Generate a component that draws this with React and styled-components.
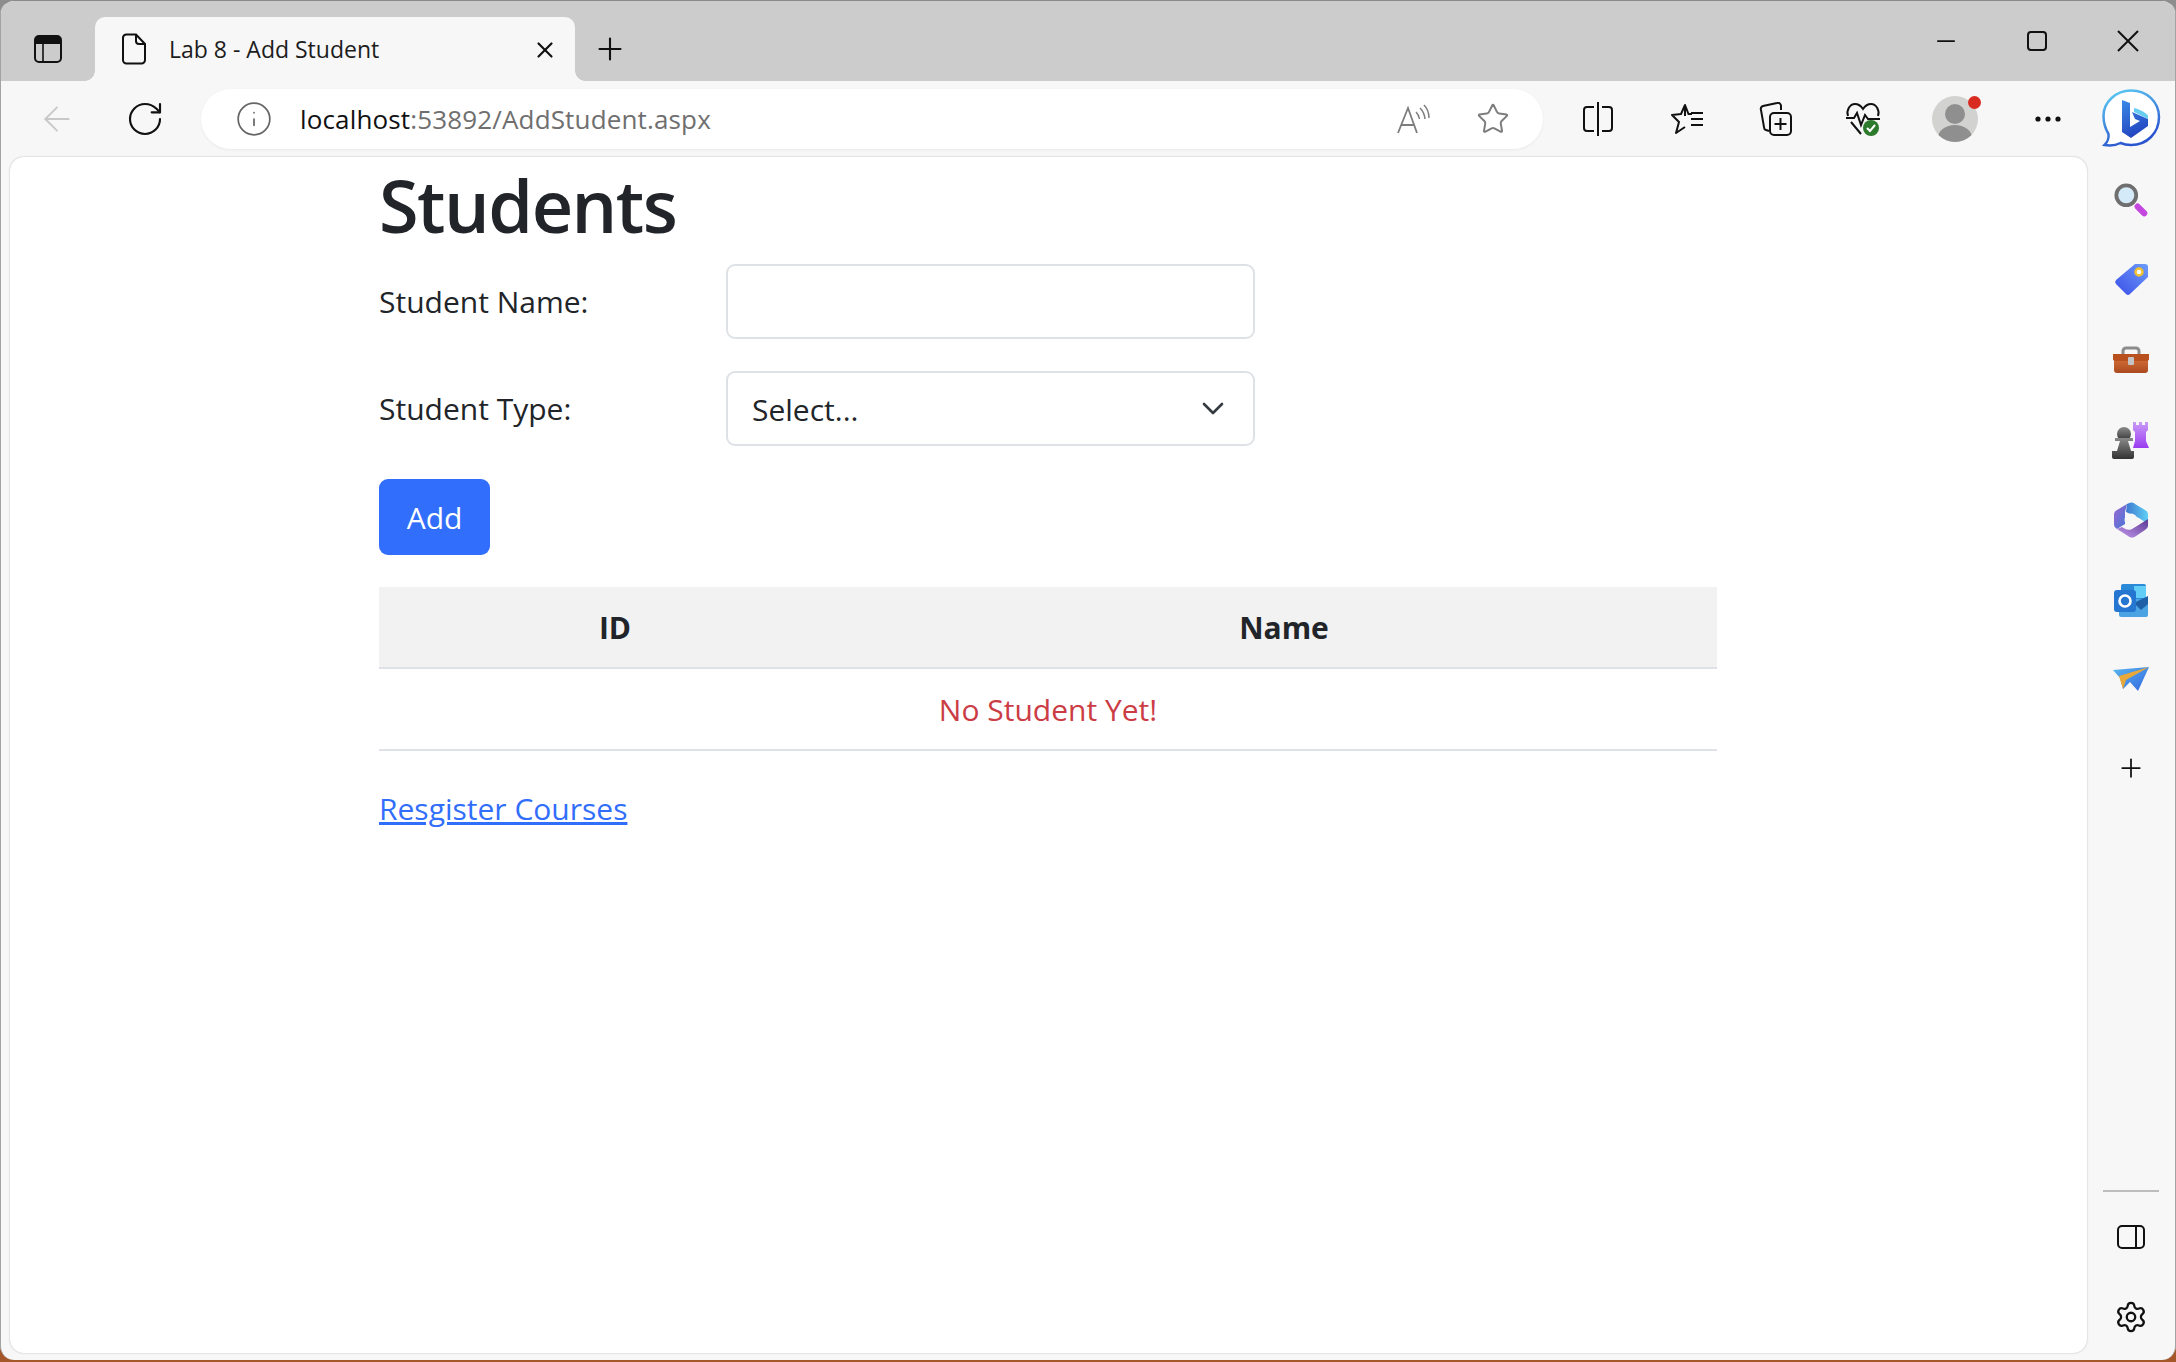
import React from "react";
import styled, { createGlobalStyle } from "styled-components";
import { ArrowLeft, Info, Minus, Plus, RotateCw, Settings, Star, X } from "lucide-react";

const uiFont = `"Open Sans", "Noto Sans", "Liberation Sans", sans-serif`;

const GlobalStyle = createGlobalStyle`
  html, body {
    margin: 0;
    padding: 0;
    background: #a5572a;
  }
  * {
    box-sizing: border-box;
  }
`;

const Desktop = styled.div`
  width: 2176px;
  height: 1362px;
  overflow: hidden;
  background: linear-gradient(#8d8d8d 0, #8d8d8d 70%, #a5572a 92%);
`;

const Browser = styled.div`
  width: 2176px;
  height: 1360px;
  display: flex;
  flex-direction: column;
  background: #f7f7f7;
  border-radius: 14px;
  border-top: 1px solid #8a8a8a;
  border-left: 1px solid #a3a3a3;
  border-right: 1px solid #a3a3a3;
  overflow: hidden;
  font-family: ${uiFont};
`;

const TabStrip = styled.div`
  height: 80px;
  flex: none;
  display: flex;
  align-items: flex-end;
  background: #cccccc;
`;

const StripSlot = styled.div`
  width: ${(p) => p.$w}px;
  height: 64px;
  flex: none;
  display: flex;
  align-items: center;
  justify-content: center;
`;

const Tab = styled.div`
  position: relative;
  width: 480px;
  height: 64px;
  flex: none;
  display: flex;
  align-items: center;
  padding: 0 0 0 26px;
  background: #f7f7f7;
  border-radius: 10px 10px 0 0;
  color: #1c1c1c;

  &::before,
  &::after {
    content: "";
    position: absolute;
    bottom: 0;
    width: 10px;
    height: 10px;
  }
  &::before {
    left: -10px;
    background: radial-gradient(circle at 0 0, #cccccc 9.5px, #f7f7f7 10px);
  }
  &::after {
    right: -10px;
    background: radial-gradient(circle at 100% 0, #cccccc 9.5px, #f7f7f7 10px);
  }
`;

const TabTitle = styled.span`
  flex: 1;
  margin-left: 22px;
  font-size: 23px;
  white-space: nowrap;
`;

const TabClose = styled.span`
  display: flex;
  width: 60px;
  justify-content: center;
  margin-top: 2px;
`;

const WindowControls = styled.div`
  margin-left: auto;
  align-self: flex-start;
  height: 80px;
  display: flex;
  padding-right: 2px;
`;

const ControlSlot = styled.div`
  width: 91px;
  display: flex;
  align-items: center;
  justify-content: center;
`;

const Toolbar = styled.div`
  height: 76px;
  flex: none;
  display: flex;
  align-items: center;
  padding-left: 12px;
  background: #f7f7f7;
`;

const ToolSlot = styled.div`
  position: relative;
  width: ${(p) => p.$w}px;
  height: 60px;
  flex: none;
  display: flex;
  align-items: center;
  justify-content: center;
`;

const AddressBar = styled.div`
  width: 1342px;
  height: 60px;
  flex: none;
  margin: 0 10px 0 12px;
  padding-left: 8px;
  display: flex;
  align-items: center;
  background: #ffffff;
  border-radius: 30px;
  box-shadow: 0 1px 3px rgba(0, 0, 0, 0.06);
`;

const UrlText = styled.div`
  flex: 1;
  margin-left: 1px;
  font-size: 26px;
  letter-spacing: 0.15px;
  color: #6f6f6f;
  white-space: nowrap;
`;

const UrlHost = styled.span`
  color: #111111;
`;

const Workspace = styled.div`
  flex: 1;
  min-height: 0;
  display: flex;
`;

const Page = styled.main`
  flex: 1;
  min-width: 0;
  margin: 0 0 7px 9px;
  background: #ffffff;
  border-radius: 14px;
  box-shadow: 0 0 2px rgba(0, 0, 0, 0.28);
  padding: 12px 1px 0 0;
`;

const Container = styled.div`
  width: 1338px;
  margin: 0 auto;
  color: #212529;
`;

const Heading = styled.h1`
  margin: 0 0 23px;
  height: 72px;
  font-size: 72px;
  line-height: 72px;
  font-weight: 600;
  letter-spacing: -1.5px;
`;

const FormRow = styled.div`
  display: flex;
  align-items: center;
  margin-bottom: 32px;
`;

const FieldLabel = styled.label`
  width: 347px;
  flex: none;
  font-size: 30px;
  line-height: 40px;
`;

const TextInput = styled.input`
  width: 529px;
  height: 75px;
  padding: 0 24px;
  background: #ffffff;
  border: 2px solid #dee2e6;
  border-radius: 9px;
  font-family: inherit;
  font-size: 30px;
`;

const SelectBox = styled.div`
  position: relative;
  width: 529px;
  height: 75px;
`;

const Select = styled.select`
  appearance: none;
  width: 100%;
  height: 100%;
  padding: 1px 60px 0 24px;
  background: #ffffff;
  border: 2px solid #dee2e6;
  border-radius: 9px;
  color: #212529;
  font-family: inherit;
  font-size: 30px;
`;

const Chevron = styled.svg`
  position: absolute;
  right: 31px;
  top: 31px;
  pointer-events: none;
`;

const AddButton = styled.button`
  display: block;
  width: 111px;
  height: 76px;
  margin-top: 33px;
  padding: 0;
  background: #316efb;
  border: 0;
  border-radius: 9px;
  color: #ffffff;
  font-family: inherit;
  font-size: 30px;
`;

const StudentTable = styled.table`
  width: 100%;
  margin-top: 32px;
  border-collapse: collapse;
  table-layout: fixed;
  font-size: 30px;
`;

const HeadCell = styled.th`
  height: 81px;
  width: ${(p) => p.$w};
  padding: 0;
  background: #f2f2f2;
  border-bottom: 2px solid #dee2e6;
  font-weight: 700;
  color: #212529;
`;

const EmptyCell = styled.td`
  height: 82px;
  padding: 0;
  text-align: center;
  color: #cb3c45;
  border-bottom: 2px solid #dee2e6;
`;

const CourseLink = styled.a`
  display: inline-block;
  margin-top: 38px;
  font-size: 30px;
  line-height: 40px;
  color: #316efb;
  text-decoration: underline;
`;

const Sidebar = styled.aside`
  width: 88px;
  flex: none;
  display: flex;
  flex-direction: column;
  align-items: center;
  padding: 3px 0 3px;
`;

const SideSlot = styled.div`
  width: 100%;
  height: 80px;
  flex: none;
  display: flex;
  align-items: center;
  justify-content: center;
  margin-top: ${(p) => p.$top || 0}px;
`;

const SideRule = styled.div`
  width: 56px;
  height: 2px;
  flex: none;
  margin-top: auto;
  margin-bottom: 5px;
  background: #bdbdbd;
`;

const Dot = styled.span`
  position: absolute;
  top: 7px;
  right: ${(p) => p.$right}px;
  width: 13px;
  height: 13px;
  border-radius: 50%;
  background: #d92c20;
`;

const PanelIcon = () => (
  <svg width="30" height="30" viewBox="0 0 30 30">
    <rect x="2" y="2" width="26" height="26" rx="4" fill="none" stroke="#111" strokeWidth="2" />
    <path d="M2 6a4 4 0 0 1 4-4h18a4 4 0 0 1 4 4v4H2z" fill="#111" />
    <path d="M10 10v18" stroke="#111" strokeWidth="1.6" />
  </svg>
);

const PageIcon = () => (
  <svg width="26" height="32" viewBox="0 0 26 32" fill="none" stroke="#111" strokeWidth="2">
    <path d="M5 1.5h10l9 9.5v16a3.5 3.5 0 0 1-3.5 3.5h-15A3.5 3.5 0 0 1 2 27V5a3.500 3.500 0 0 1 3-3.500z" />
    <path d="M15 1.500V8a3 3 0 0 0 3 3h6" />
  </svg>
);

const ReadAloudIcon = () => (
  <svg width="34" height="30" viewBox="0 0 34 30" fill="none" stroke="#7d7d7d" strokeWidth="1.8">
    <path d="M2 29 12 4l9 25M5.500 21h13" />
    <path d="M20 8c2 2 3 4 3.500 7M24 4c3 3 4.500 6 5 11M28 1c3 3 5 8 5 13" strokeWidth="1.500" />
  </svg>
);

const SplitIcon = () => (
  <svg width="32" height="36" viewBox="0 0 32 36" fill="none" stroke="#111" strokeWidth="2">
    <path d="M12 6H5a3 3 0 0 0-3 3v18a3 3 0 0 0 3 3h7M20 6h7a3 3 0 0 1 3 3v18a3 3 0 0 1-3 3h-7M16 1v34" />
  </svg>
);

const FavoritesIcon = () => (
  <svg width="34" height="32" viewBox="0 0 34 32" fill="none" stroke="#111" strokeWidth="2">
    <path d="M15 13V2l-4 9-9 1 7 7-3 11 9-6" strokeLinejoin="round" />
    <path d="M15 2l3.500 9H22M21 16h12M21 22h12M21 10h12" />
  </svg>
);

const CollectionsIcon = () => (
  <svg width="34" height="34" viewBox="0 0 34 34" fill="none" stroke="#111" strokeWidth="2">
    <path d="M10 29 7 28a3 3 0 0 1-2-3L2 8a3 3 0 0 1 2-4l14-3a3 3 0 0 1 4 3v4" />
    <rect x="11" y="11" width="21" height="22" rx="4" />
    <path d="M21.500 16v12M15.500 22h12" />
  </svg>
);

const HealthIcon = () => (
  <svg width="36" height="36" viewBox="0 0 36 36" fill="none">
    <path
      d="M3 15C1 9 5 3 10 3c3 0 6 2 8 5 2-3 5-5 8-5 5 0 9 6 7 12M6 21l10 12"
      stroke="#111"
      strokeWidth="2"
    />
    <path d="M1 17h8l3-5 4 12 4-10 3 4h12" stroke="#111" strokeWidth="2" />
    <circle cx="26" cy="27" r="8" fill="#2c7a2c" />
    <path d="m22 27 3 3 5-6" stroke="#fff" strokeWidth="2" />
  </svg>
);

const AvatarIcon = () => (
  <svg width="46" height="46" viewBox="0 0 46 46">
    <defs>
      <clipPath id="avatar-clip">
        <circle cx="23" cy="23" r="23" />
      </clipPath>
    </defs>
    <circle cx="23" cy="23" r="23" fill="#d2d2d0" />
    <g clipPath="url(#avatar-clip)" fill="#8f8f8f">
      <ellipse cx="23" cy="18" rx="10" ry="10" />
      <ellipse cx="23" cy="42" rx="17" ry="13" />
    </g>
  </svg>
);

const MoreDots = () => (
  <svg width="26" height="6" viewBox="0 0 26 6" fill="#111">
    <circle cx="3" cy="3" r="2.600" />
    <circle cx="13" cy="3" r="2.600" />
    <circle cx="23" cy="3" r="2.600" />
  </svg>
);

const BingIcon = () => (
  <svg width="60" height="60" viewBox="0 0 60 60">
    <defs>
      <linearGradient id="bing-ring" x1="0" y1="0" x2="0.4" y2="1">
        <stop offset="0" stopColor="#5fd0f5" />
        <stop offset="1" stopColor="#2a55cf" />
      </linearGradient>
      <linearGradient id="bing-b" x1="0" y1="0" x2="0.3" y2="1">
        <stop offset="0" stopColor="#3b8be8" />
        <stop offset="1" stopColor="#2346c0" />
      </linearGradient>
    </defs>
    <path
      d="M30 1.500C15 1.500 2.500 13 2.500 27c0 7 2 13 5 18 .5 4-1 8-4 11 6 1 12 0 16-2 3.500 1.500 7 2 10.500 2C46 56 58 44 58 28 58 13 46 1.500 30 1.500z"
      fill="#fff"
      stroke="url(#bing-ring)"
      strokeWidth="2.500"
    />
    <path d="M21 11l8 3v24l10-6-5-2-3-7 16 7v7L30 49l-9-6z" fill="url(#bing-b)" />
    <path d="M33 23l14 7v-3c-1-3-9-7-14-8z" fill="#67cdf0" />
  </svg>
);

const SearchIcon = () => (
  <svg width="34" height="34" viewBox="0 0 36 36">
    <circle cx="13" cy="13" r="10.500" fill="#d5eaf8" stroke="#6f6f6f" strokeWidth="4" />
    <path d="m25 25 7 7" stroke="#c447e0" strokeWidth="6.500" strokeLinecap="round" />
  </svg>
);

const TagIcon = () => (
  <svg width="34" height="34" viewBox="0 0 34 34">
    <defs>
      <linearGradient id="tag-fill" x1="1" y1="0" x2="0" y2="1">
        <stop offset="0" stopColor="#6d9cf8" />
        <stop offset="1" stopColor="#3a4ee8" />
      </linearGradient>
    </defs>
    <path d="M21 1h10a3 3 0 0 1 3 3v10L16 31a3 3 0 0 1-4 0L2 21a3 3 0 0 1 0-4z" fill="url(#tag-fill)" />
    <circle cx="25" cy="9" r="3.500" fill="#fff" stroke="#f2c230" strokeWidth="2.500" />
  </svg>
);

const ToolboxIcon = () => (
  <svg width="38" height="28" viewBox="0 0 38 28">
    <defs>
      <linearGradient id="box-fill" x1="0" y1="0" x2="0" y2="1">
        <stop offset="0" stopColor="#cf6a34" />
        <stop offset="1" stopColor="#ab4a20" />
      </linearGradient>
    </defs>
    <path d="M11 8V5a3 3 0 0 1 3-3h10a3 3 0 0 1 3 3v3" fill="none" stroke="#8c8c8c" strokeWidth="3" />
    <path d="M2 14h34v10a3 3 0 0 1-3 3H5a3 3 0 0 1-3-3z" fill="url(#box-fill)" />
    <path d="M1 8h36v6l-2 1H3l-2-1z" fill="#b9511f" />
    <rect x="16" y="11" width="6" height="8" rx="1" fill="#c4c4c4" />
  </svg>
);

const ChessIcon = () => (
  <svg width="38" height="38" viewBox="0 0 38 38">
    <defs>
      <linearGradient id="pawn-fill" x1="0" y1="0" x2="0" y2="1">
        <stop offset="0" stopColor="#8a8a8a" />
        <stop offset="1" stopColor="#333" />
      </linearGradient>
      <linearGradient id="rook-fill" x1="0" y1="0" x2="0" y2="1">
        <stop offset="0" stopColor="#c99cf8" />
        <stop offset="1" stopColor="#9a3cf0" />
      </linearGradient>
    </defs>
    <path d="M21 1h3v3h3V1h3v3h3V1h3v8l-2 2v9l3 7H21l2-7v-9l-2-2z" fill="url(#rook-fill)" />
    <circle cx="12" cy="13" r="7" fill="url(#pawn-fill)" />
    <path d="M3 17h18v3h-5l3 10h3v6a2 2 0 0 1-2 2H2a2 2 0 0 1-2-2v-6h5l3-10H3z" fill="url(#pawn-fill)" />
  </svg>
);

const SuiteIcon = () => (
  <svg width="34" height="36" viewBox="0 0 34 36">
    <defs>
      <linearGradient id="suite-left" x1="0" y1="0" x2="1" y2="1">
        <stop offset="0" stopColor="#a066d0" />
        <stop offset="1" stopColor="#3f78d8" />
      </linearGradient>
      <linearGradient id="suite-right" x1="0" y1="0" x2="1" y2="0">
        <stop offset="0" stopColor="#3f78d0" />
        <stop offset="1" stopColor="#5fd0f5" />
      </linearGradient>
      <linearGradient id="suite-low" x1="0" y1="1" x2="1" y2="0">
        <stop offset="0" stopColor="#c498ee" />
        <stop offset="1" stopColor="#5c3a94" />
      </linearGradient>
    </defs>
    <path d="M13 2 3 8a5 5 0 0 0-3 5v10a5 5 0 0 0 3 4l8-5V10z" fill="url(#suite-left)" />
    <path d="M13 2c3-2 6-2 8 0l10 6a5 5 0 0 1 3 5v9l-9-6-13-6z" fill="url(#suite-right)" />
    <path d="M3 27l11 7c3 2 5 2 8 0l9-6a5 5 0 0 0 3-5v-6l-11 7-5 3c-4 2-7 0-10-2z" fill="url(#suite-low)" />
    <circle cx="17" cy="18" r="6.500" fill="#f7f7f7" />
  </svg>
);

const OutlookIcon = () => (
  <svg width="34" height="34" viewBox="0 0 34 34">
    <rect x="7" y="1" width="25" height="24" rx="2" fill="#2a8ad8" />
    <rect x="20" y="3" width="12" height="12" fill="#62cdf6" />
    <path d="M5 16h29v16a2 2 0 0 1-2 2H7a2 2 0 0 1-2-2z" fill="#4ba3e3" />
    <path d="m20 20 14-7v8l-7 6z" fill="#1f5fa8" />
    <rect x="0" y="7" width="22" height="22" rx="3" fill="#2476d0" />
    <circle cx="11" cy="18" r="5.500" fill="none" stroke="#fff" strokeWidth="2.600" />
  </svg>
);

const SendIcon = () => (
  <svg width="36" height="26" viewBox="0 0 36 26">
    <defs>
      <linearGradient id="send-fill" x1="0" y1="0" x2="1" y2="1">
        <stop offset="0" stopColor="#59b7ee" />
        <stop offset="1" stopColor="#3366e0" />
      </linearGradient>
    </defs>
    <path d="M0 3 36 0 25 24l-8-9-7 7-3-11z" fill="url(#send-fill)" />
    <path d="M36 0 6 9l4 13 3-9z" fill="#e8a93a" />
  </svg>
);

const SidePanelIcon = () => (
  <svg width="28" height="24" viewBox="0 0 28 24" fill="none" stroke="#111" strokeWidth="2">
    <rect x="1" y="1" width="26" height="22" rx="4" />
    <path d="M19 1v22" />
  </svg>
);

const App = () => {
  return (
    <Desktop>
      <GlobalStyle />
      <Browser>
        <TabStrip>
          <StripSlot $w={94}>
            <PanelIcon />
          </StripSlot>
          <Tab>
            <PageIcon />
            <TabTitle>Lab 8 - Add Student</TabTitle>
            <TabClose>
              <X size={26} strokeWidth={2} color="#111" />
            </TabClose>
          </Tab>
          <StripSlot $w={70}>
            <Plus size={36} strokeWidth={1.4} color="#111" />
          </StripSlot>
          <WindowControls>
            <ControlSlot>
              <Minus size={28} strokeWidth={1.5} color="#111" />
            </ControlSlot>
            <ControlSlot>
              <svg width="20" height="20" viewBox="0 0 20 20" fill="none" stroke="#111" strokeWidth="2">
                <rect x="1" y="1" width="18" height="18" rx="3" />
              </svg>
            </ControlSlot>
            <ControlSlot>
              <svg width="22" height="22" viewBox="0 0 22 22" stroke="#111" strokeWidth="2">
                <path d="m1 1 20 20M21 1 1 21" />
              </svg>
            </ControlSlot>
          </WindowControls>
        </TabStrip>

        <Toolbar>
          <ToolSlot $w={88}>
            <ArrowLeft size={40} strokeWidth={1.1} color="#c8c8c8" />
          </ToolSlot>
          <ToolSlot $w={88}>
            <RotateCw size={40} strokeWidth={1.3} color="#111" />
          </ToolSlot>
          <AddressBar>
            <ToolSlot $w={90}>
              <Info size={38} strokeWidth={1.1} color="#666" />
            </ToolSlot>
            <UrlText>
              <UrlHost>localhost</UrlHost>:53892/AddStudent.aspx
            </UrlText>
            <ToolSlot $w={80}>
              <ReadAloudIcon />
            </ToolSlot>
            <ToolSlot $w={80}>
              <Star size={34} strokeWidth={1.4} color="#7d7d7d" />
            </ToolSlot>
            <ToolSlot $w={10} />
          </AddressBar>
          <ToolSlot $w={90}>
            <SplitIcon />
          </ToolSlot>
          <ToolSlot $w={88}>
            <FavoritesIcon />
          </ToolSlot>
          <ToolSlot $w={90}>
            <CollectionsIcon />
          </ToolSlot>
          <ToolSlot $w={83}>
            <HealthIcon />
          </ToolSlot>
          <ToolSlot $w={102}>
            <AvatarIcon />
            <Dot $right={25} />
          </ToolSlot>
          <ToolSlot $w={83}>
            <MoreDots />
          </ToolSlot>
          <ToolSlot $w={84}>
            <BingIcon />
          </ToolSlot>
        </Toolbar>

        <Workspace>
          <Page>
            <Container>
              <Heading>Students</Heading>
              <FormRow>
                <FieldLabel htmlFor="student-name">Student Name:</FieldLabel>
                <TextInput id="student-name" type="text" />
              </FormRow>
              <FormRow>
                <FieldLabel htmlFor="student-type">Student Type:</FieldLabel>
                <SelectBox>
                  <Select id="student-type">
                    <option>Select...</option>
                  </Select>
                  <Chevron width="22" height="13" viewBox="0 0 22 13" fill="none" stroke="#343a40" strokeWidth="2.600">
                    <path d="m2 2 9 9 9-9" strokeLinecap="round" strokeLinejoin="round" />
                  </Chevron>
                </SelectBox>
              </FormRow>
              <AddButton type="button">Add</AddButton>
              <StudentTable>
                <thead>
                  <tr>
                    <HeadCell $w="472px">ID</HeadCell>
                    <HeadCell>Name</HeadCell>
                  </tr>
                </thead>
                <tbody>
                  <tr>
                    <EmptyCell colSpan={2}>No Student Yet!</EmptyCell>
                  </tr>
                </tbody>
              </StudentTable>
              <CourseLink href="#">Resgister Courses</CourseLink>
            </Container>
          </Page>
          <Sidebar>
            <SideSlot>
              <SearchIcon />
            </SideSlot>
            <SideSlot>
              <TagIcon />
            </SideSlot>
            <SideSlot>
              <ToolboxIcon />
            </SideSlot>
            <SideSlot>
              <ChessIcon />
            </SideSlot>
            <SideSlot>
              <SuiteIcon />
            </SideSlot>
            <SideSlot>
              <OutlookIcon />
            </SideSlot>
            <SideSlot>
              <SendIcon />
            </SideSlot>
            <SideSlot $top={8}>
              <Plus size={30} strokeWidth={1.4} color="#111" />
            </SideSlot>
            <SideRule />
            <SideSlot>
              <SidePanelIcon />
            </SideSlot>
            <SideSlot>
              <Settings size={34} strokeWidth={1.6} color="#111" />
            </SideSlot>
          </Sidebar>
        </Workspace>
      </Browser>
    </Desktop>
  );
};

export default App;
